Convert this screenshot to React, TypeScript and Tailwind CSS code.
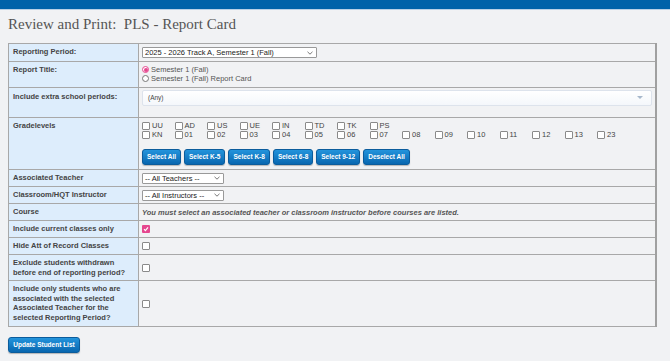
import React from "react";

const row1 = ["UU", "AD", "US", "UE", "IN", "TD", "TK", "PS"];
const row2 = ["KN", "01", "02", "03", "04", "05", "06", "07", "08", "09", "10", "11", "12", "13", "23"];
const buttons = ["Select All", "Select K-5", "Select K-8", "Select 6-8", "Select 9-12", "Deselect All"];

function Box({ checked = false }: { checked?: boolean }) {
  if (checked) {
    return (
      <span className="inline-flex h-[8px] w-[8px] items-center justify-center rounded-[1px] bg-[#e5478f]">
        <svg width="6" height="6" viewBox="0 0 6 6">
          <path d="M1 3.2 L2.4 4.6 L5 1.4" stroke="white" strokeWidth="1.2" fill="none" />
        </svg>
      </span>
    );
  }
  return <span className="inline-block h-[8px] w-[8px] rounded-[1px] border border-[#8a8a8a] bg-white" />;
}

function Grade({ code }: { code: string }) {
  return (
    <span className="flex w-[32.5px] items-center gap-[2px]">
      <Box />
      <span>{code}</span>
    </span>
  );
}

function Select({ label, width }: { label: string; width: string }) {
  return (
    <div className={`flex h-[11px] items-center justify-between rounded-[1px] border border-[#999] bg-white pl-[2px] pr-[3px] text-[7.5px] leading-[9px] text-[#222] ${width}`}>
      <span>{label}</span>
      <svg width="6" height="4" viewBox="0 0 6 4">
        <path d="M0.5 0.8 L3 3.2 L5.5 0.8" stroke="#555" strokeWidth="0.8" fill="none" />
      </svg>
    </div>
  );
}

function Label({ children }: { children: React.ReactNode }) {
  return (
    <td className="w-[130px] border border-[#a8a8a8] bg-[#ddedfc] px-[4px] py-0 align-top text-[7.5px] font-bold leading-[9.7px] text-[#444]">
      {children}
    </td>
  );
}

function Cell({ children, className = "" }: { children?: React.ReactNode; className?: string }) {
  return <td className={`border border-[#a8a8a8] px-[3px] py-0 ${className}`}>{children}</td>;
}

function BlueButton({ children, className = "" }: { children: React.ReactNode; className?: string }) {
  return (
    <button
      className={`flex h-[16px] items-center justify-center rounded-[3px] border border-[#0b5c9c] bg-gradient-to-b from-[#2394dc] to-[#0867b0] text-[6.5px] font-bold leading-none text-white shadow-[0_1px_1px_rgba(0,0,0,0.25)] ${className}`}
    >
      {children}
    </button>
  );
}

export default function App() {
  return (
    <div className="min-h-[361px] bg-[#f1f2f4] font-['Liberation_Sans',Arial,sans-serif]">
      <div className="h-[10px] border-b border-[#b9d0e6] bg-[#0062a9]" />
      <h1 className="px-[8px] pt-[5px] font-['Liberation_Serif',serif] text-[15px] leading-[18px] text-[#555]">
        Review and Print:&nbsp; PLS - Report Card
      </h1>

      <table className="mx-[8px] mt-[10px] w-[649px] border-collapse border-r-2 border-r-[#a0a0a0]">
        <tbody>
          <tr className="h-[18px]">
            <Label>
              <div className="pt-[3px]">Reporting Period:</div>
            </Label>
            <Cell className="align-middle">
              <Select label="2025 - 2026 Track A, Semester 1 (Fall)" width="w-[175px]" />
            </Cell>
          </tr>
          <tr className="h-[26px]">
            <Label>
              <div className="pt-[3px]">Report Title:</div>
            </Label>
            <Cell className="align-top text-[7.5px] leading-[9px] text-[#555]">
              <div className="flex items-center gap-[2px] pt-[3px]">
                <span className="inline-flex h-[7px] w-[7px] items-center justify-center rounded-full border border-[#e5478f] bg-white">
                  <span className="h-[4px] w-[4px] rounded-full bg-[#e5478f]" />
                </span>
                Semester 1 (Fall)
              </div>
              <div className="flex items-center gap-[2px]">
                <span className="inline-block h-[7px] w-[7px] rounded-full border border-[#777] bg-white" />
                Semester 1 (Fall) Report Card
              </div>
            </Cell>
          </tr>
          <tr className="h-[30px]">
            <Label>
              <div className="pt-[4px]">Include extra school periods:</div>
            </Label>
            <Cell className="align-top">
              <div className="mt-[2px] flex h-[16px] items-center justify-between rounded-[2px] border border-[#dde3ec] bg-gradient-to-b from-white to-[#f4f7fb] pl-[5px] pr-[8px] text-[6.5px] text-[#444]">
                <span>(Any)</span>
                <svg width="6" height="4" viewBox="0 0 6 4">
                  <path d="M0 0 L6 0 L3 3 Z" fill="#a7b8cc" />
                </svg>
              </div>
            </Cell>
          </tr>
          <tr className="h-[52px]">
            <Label>
              <div className="pt-[3px]">Gradelevels</div>
            </Label>
            <Cell className="align-top text-[7.5px] leading-[9px] text-[#444]">
              <div className="flex pt-[3px]">
                {row1.map((c) => (
                  <Grade key={c} code={c} />
                ))}
              </div>
              <div className="flex">
                {row2.map((c) => (
                  <Grade key={c} code={c} />
                ))}
              </div>
              <div className="mt-[10px] flex gap-[3px]">
                {buttons.map((b) => (
                  <BlueButton key={b} className="px-[4px]">
                    {b}
                  </BlueButton>
                ))}
              </div>
            </Cell>
          </tr>
          <tr className="h-[17px]">
            <Label>
              <div className="pt-[3px]">Associated Teacher</div>
            </Label>
            <Cell className="align-middle">
              <Select label="-- All Teachers --" width="w-[82px]" />
            </Cell>
          </tr>
          <tr className="h-[17px]">
            <Label>
              <div className="pt-[3px]">Classroom/HQT Instructor</div>
            </Label>
            <Cell className="align-middle">
              <Select label="-- All Instructors --" width="w-[82px]" />
            </Cell>
          </tr>
          <tr className="h-[17px]">
            <Label>
              <div className="pt-[3px]">Course</div>
            </Label>
            <Cell className="align-middle text-[7.5px] font-bold italic leading-[9px] text-[#555]">
              You must select an associated teacher or classroom instructor before courses are listed.
            </Cell>
          </tr>
          <tr className="h-[17px]">
            <Label>
              <div className="pt-[3px]">Include current classes only</div>
            </Label>
            <Cell className="align-middle">
              <div className="flex">
                <Box checked />
              </div>
            </Cell>
          </tr>
          <tr className="h-[17px]">
            <Label>
              <div className="pt-[3px]">Hide Att of Record Classes</div>
            </Label>
            <Cell className="align-middle">
              <div className="flex">
                <Box />
              </div>
            </Cell>
          </tr>
          <tr className="h-[26px]">
            <Label>
              <div className="pt-[3px]">
                Exclude students withdrawn
                <br />
                before end of reporting period?
              </div>
            </Label>
            <Cell className="align-middle">
              <div className="flex">
                <Box />
              </div>
            </Cell>
          </tr>
          <tr className="h-[46px]">
            <Label>
              <div className="pt-[3px]">
                Include only students who are
                <br />
                associated with the selected
                <br />
                Associated Teacher for the
                <br />
                selected Reporting Period?
              </div>
            </Label>
            <Cell className="align-middle">
              <div className="flex">
                <Box />
              </div>
            </Cell>
          </tr>
        </tbody>
      </table>

      <div className="flex px-[8px] pt-[10px]">
        <BlueButton className="w-[72px]">Update Student List</BlueButton>
      </div>
    </div>
  );
}
